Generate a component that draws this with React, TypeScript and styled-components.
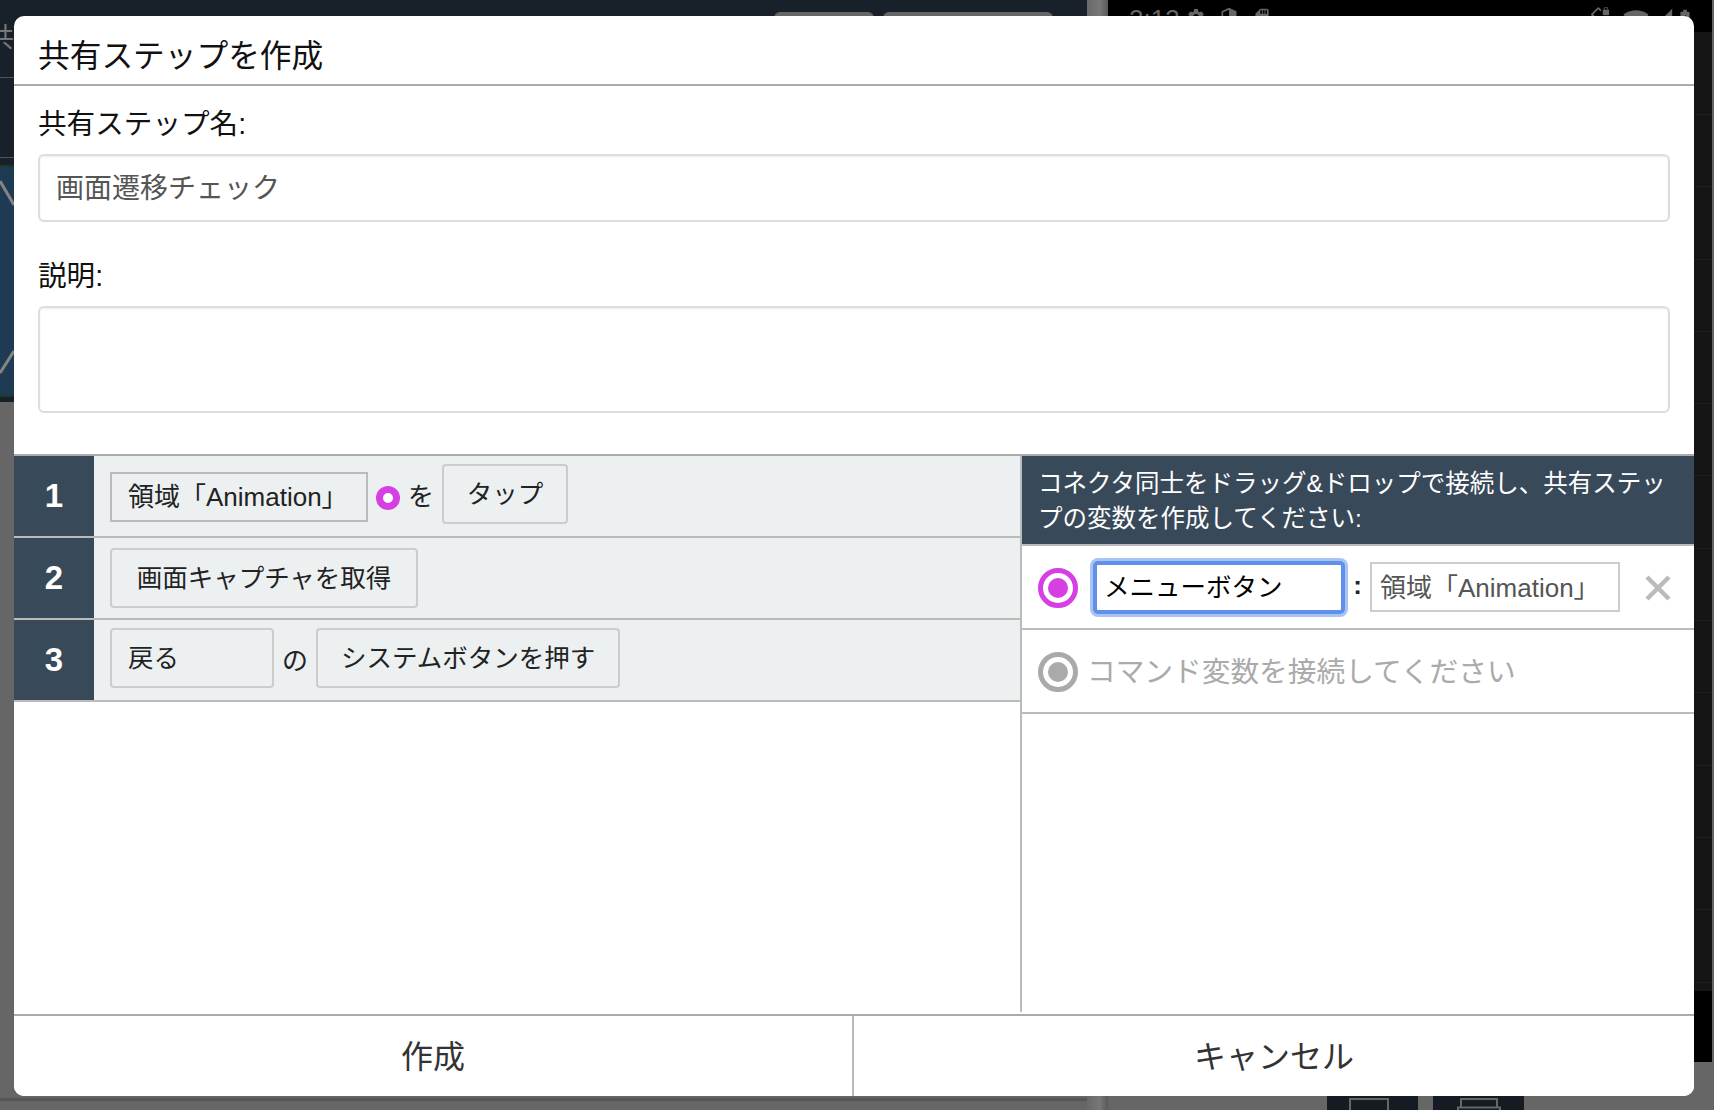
import React from 'react'
import styled, { createGlobalStyle } from 'styled-components'
import {
  MdBatteryChargingFull,
  MdSdStorage,
  MdScreenLockRotation,
  MdSecurity,
  MdSettings,
  MdSignalCellular4Bar,
  MdSignalWifi4Bar
} from 'react-icons/md'

const GlobalStyle = createGlobalStyle`
  html, body {
    margin: 0;
    padding: 0;
    overflow: hidden;
    background: #666;
  }
  * {
    box-sizing: border-box;
  }
  body, input, textarea, button {
    font-family: "Liberation Sans", "Noto Sans CJK JP", sans-serif;
  }
`

const deviceRows = Array.from({ length: 13 }, (_, i) => i)

const App = () => (
  <Page lang="ja">
    <GlobalStyle />
    <Backdrop>
      <AppColumn>
        <AppTop>
          <AppBar>
            <GhostTitle>共</GhostTitle>
            <GhostTab $width={100} />
            <GhostTab $width={170} />
          </AppBar>
          <AppBarRow />
          <Thumb width="14" height="236" viewBox="0 0 14 236">
            <circle cx="3" cy="118" r="115" fill="#1f3b54" stroke="#1f3a2c" strokeWidth="2" />
            <path d="M0 18 L14 42 M14 188 L0 210" stroke="#858585" strokeWidth="3" fill="none" />
          </Thumb>
        </AppTop>
        <AppBottom />
      </AppColumn>
      <Splitter />
      <DeviceColumn>
        <Device>
          <StatusBar>
            <Clock>2:13</Clock>
            <StatusIcons>
              <MdSettings size={20} />
              <MdSecurity size={20} />
              <MdSdStorage size={20} />
            </StatusIcons>
            <StatusRight>
              <StatusSlot $width={40}><MdScreenLockRotation size={22} /></StatusSlot>
              <StatusSlot $width={32}><MdSignalWifi4Bar size={26} /></StatusSlot>
              <StatusSlot $width={22}><MdSignalCellular4Bar size={22} /></StatusSlot>
              <StatusSlot $width={22}><MdBatteryChargingFull size={24} /></StatusSlot>
            </StatusRight>
          </StatusBar>
          <DeviceList>
            {deviceRows.map(row => (
              <DeviceRow key={row} $first={row === 0} />
            ))}
          </DeviceList>
          <NavBar />
        </Device>
        <DeviceTools>
          <ToolBox $shift={8}>
            <ToolIcon width="40" height="12" viewBox="0 0 40 12">
              <path d="M1 12 V1 H39 V12" fill="none" stroke="#666" strokeWidth="2" />
            </ToolIcon>
          </ToolBox>
          <ToolBox $shift={0}>
            <ToolIcon width="44" height="12" viewBox="0 0 44 12">
              <path d="M4 9 V1 H40 V9 M1 12 V9.5 H43 V12" fill="none" stroke="#666" strokeWidth="2" />
            </ToolIcon>
          </ToolBox>
        </DeviceTools>
      </DeviceColumn>
    </Backdrop>

    <Modal>
      <ModalTitle>共有ステップを作成</ModalTitle>
      <Fields>
        <FieldLabel>共有ステップ名:</FieldLabel>
        <NameInput value="画面遷移チェック" readOnly />
        <FieldLabel $spaced>説明:</FieldLabel>
        <DescriptionInput readOnly />
      </Fields>
      <Workspace>
        <StepList>
          <StepRow>
            <StepNumber>1</StepNumber>
            <StepBody $shift={5}>
              <ValueChip $width={258}>領域「Animation」</ValueChip>
              <StepPort />
              <Word>を</Word>
              <CommandButton $width={126}>タップ</CommandButton>
            </StepBody>
          </StepRow>
          <StepRow>
            <StepNumber>2</StepNumber>
            <StepBody $shift={1}>
              <CommandButton $width={308}>画面キャプチャを取得</CommandButton>
            </StepBody>
          </StepRow>
          <StepRow>
            <StepNumber>3</StepNumber>
            <StepBody $shift={5}>
              <CommandButton $width={164} $left>戻る</CommandButton>
              <Word>の</Word>
              <CommandButton $width={304}>システムボタンを押す</CommandButton>
            </StepBody>
          </StepRow>
        </StepList>
        <VariablePanel>
          <VariableHeader>
            コネクタ同士をドラッグ&ドロップで接続し、共有ステップの変数を作成してください:
          </VariableHeader>
          <VariableRow>
            <Connector $color="#d63fe3" />
            <VariableName value="メニューボタン" readOnly />
            <Colon>:</Colon>
            <VariableTarget value="領域「Animation」" readOnly />
            <RemoveIcon width="26" height="26" viewBox="0 0 26 26">
              <path d="M2 2 L24 24 M24 2 L2 24" stroke="#bbb" strokeWidth="4.5" fill="none" />
            </RemoveIcon>
          </VariableRow>
          <VariableRow>
            <Connector $color="#aaa" />
            <Placeholder>コマンド変数を接続してください</Placeholder>
          </VariableRow>
        </VariablePanel>
      </Workspace>
      <Footer>
        <FooterButton>作成</FooterButton>
        <FooterButton $divided>キャンセル</FooterButton>
      </Footer>
    </Modal>
  </Page>
)

const Page = styled.div`
  position: relative;
  width: 1714px;
  height: 1110px;
  overflow: hidden;
  background: #666;
`

const Backdrop = styled.div`
  display: flex;
  height: 100%;
`

const AppColumn = styled.div`
  width: 1087px;
  display: flex;
  flex-direction: column;
`

const AppTop = styled.div`
  height: 402px;
  background: #18202a;
  overflow: hidden;
`

const AppBar = styled.div`
  height: 78px;
  display: flex;
  align-items: flex-start;
  gap: 9px;
  padding-right: 34px;
  border-bottom: 1px solid #555;
`

const AppBarRow = styled.div`
  height: 80px;
  border-bottom: 1px solid #555;
`

const GhostTitle = styled.span`
  margin: 20px auto 0 -13px;
  color: #777;
  font-size: 27px;
  line-height: 36px;
`

const GhostTab = styled.div<{ $width: number }>`
  width: ${props => props.$width}px;
  height: 40px;
  margin-top: 12px;
  border-radius: 6px;
  background: #666;
`

const Thumb = styled.svg`
  display: block;
  margin-top: 5px;
`

const AppBottom = styled.div`
  height: 699px;
  border-bottom: 3px solid #565656;
  background: #666;
`

const Splitter = styled.div`
  width: 21px;
  height: 100%;
  background: linear-gradient(to right, #696969, #787878 60%, #5a5a5a);
`

const DeviceColumn = styled.div`
  width: 604px;
  display: flex;
  flex-direction: column;
`

const Device = styled.div`
  height: 1062px;
  display: flex;
  flex-direction: column;
  background: #000;
`

const StatusBar = styled.div`
  height: 32px;
  flex: none;
  display: flex;
  align-items: flex-start;
  padding: 7px 16px 0 21px;
  color: #666;
  overflow: hidden;
`

const Clock = styled.span`
  width: 50px;
  font-size: 26px;
  line-height: 24px;
`

const StatusIcons = styled.div`
  display: flex;
  gap: 13px;
  margin-left: 7px;
`

const StatusRight = styled.div`
  display: flex;
  margin-left: auto;
`

const StatusSlot = styled.div<{ $width: number }>`
  width: ${props => props.$width}px;
  display: flex;
  justify-content: center;
`

const DeviceList = styled.div`
  height: 959px;
  flex: none;
  overflow: hidden;
  background: #141414;
`

const DeviceRow = styled.div<{ $first: boolean }>`
  height: ${props => (props.$first ? 83 : 72.3)}px;
  border-bottom: 1px solid #1e1e1e;
`

const NavBar = styled.div`
  flex: 1;
  background: #000;
`

const DeviceTools = styled.div`
  display: flex;
  gap: 15px;
  height: 48px;
  padding-left: 219px;
`

const ToolBox = styled.div<{ $shift: number }>`
  width: 91px;
  height: 100%;
  display: flex;
  justify-content: center;
  padding: 36px ${props => props.$shift}px 0 0;
  background: #141b23;
`

const ToolIcon = styled.svg`
  display: block;
`

const Modal = styled.div`
  position: absolute;
  top: 16px;
  left: 14px;
  width: 1680px;
  height: 1080px;
  display: flex;
  flex-direction: column;
  overflow: hidden;
  border-radius: 10px;
  background: #fff;
`

const ModalTitle = styled.div`
  height: 70px;
  flex: none;
  padding: 16px 24px 0;
  border-bottom: 2px solid #aaa;
  color: #111;
  font-size: 31.7px;
  line-height: 48px;
`

const Fields = styled.div`
  height: 368px;
  flex: none;
  padding: 18px 24px 0;
`

const FieldLabel = styled.div<{ $spaced?: boolean }>`
  height: 40px;
  margin: ${props => (props.$spaced ? '34px' : '0')} 0 10px;
  color: #111;
  font-size: 28.6px;
  line-height: 40px;
`

const NameInput = styled.input`
  display: block;
  width: 1632px;
  height: 68px;
  padding: 0 16px 4px;
  border: 2px solid #ddd;
  border-radius: 6px;
  outline: none;
  box-shadow: inset 0 1px 2px rgba(0, 0, 0, 0.08);
  color: #555;
  font-size: 28px;
`

const DescriptionInput = styled.textarea`
  display: block;
  width: 1632px;
  height: 107px;
  padding: 10px 16px;
  border: 2px solid #ddd;
  border-radius: 6px;
  outline: none;
  resize: none;
  box-shadow: inset 0 1px 2px rgba(0, 0, 0, 0.08);
`

const Workspace = styled.div`
  flex: 1;
  min-height: 0;
  display: flex;
  padding-bottom: 2px;
  border-top: 2px solid #aaa;
`

const StepList = styled.div`
  width: 1006px;
  flex: none;
`

const StepRow = styled.div`
  height: 82px;
  display: flex;
  border-bottom: 2px solid #bbb;
  background: #ecf0f1;
`

const StepNumber = styled.div`
  width: 80px;
  flex: none;
  display: flex;
  align-items: center;
  justify-content: center;
  background: #38495a;
  color: #fff;
  font-size: 33px;
  font-weight: 700;
`

const StepBody = styled.div<{ $shift: number }>`
  flex: 1;
  display: flex;
  align-items: center;
  padding: 0 0 ${props => props.$shift}px 16px;
  color: #222;
  font-size: 26px;
`

const ValueChip = styled.div<{ $width: number }>`
  width: ${props => props.$width}px;
  height: 50px;
  margin-top: 7px;
  padding-left: 16px;
  border: 2px solid #bbb;
  line-height: 46px;
  white-space: nowrap;
`

const StepPort = styled.span`
  width: 24px;
  height: 24px;
  margin: 9px 0 0 8px;
  border: 7px solid #d63fe3;
  border-radius: 50%;
  background: #fff;
`

const Word = styled.span`
  margin: 6px 8px 0;
  line-height: 36px;
`

const CommandButton = styled.div<{ $width: number; $left?: boolean }>`
  width: ${props => props.$width}px;
  height: 60px;
  padding-left: ${props => (props.$left ? '16px' : '0')};
  border: 2px solid #ccc;
  border-radius: 4px;
  font-size: 25.5px;
  line-height: 57px;
  text-align: ${props => (props.$left ? 'left' : 'center')};
  white-space: nowrap;
`

const VariablePanel = styled.div`
  flex: 1;
  border-left: 2px solid #bbb;
`

const VariableHeader = styled.div`
  height: 90px;
  padding: 10px 20px 0 16px;
  border-bottom: 2px solid #bbb;
  background: #38495a;
  color: #fff;
  font-size: 24.5px;
  line-height: 35px;
`

const VariableRow = styled.div`
  height: 84px;
  display: flex;
  align-items: center;
  padding-left: 16px;
  border-bottom: 2px solid #bbb;
`

const Connector = styled.span<{ $color: string }>`
  width: 40px;
  height: 40px;
  flex: none;
  display: flex;
  align-items: center;
  justify-content: center;
  margin-top: 2px;
  border: 5px solid ${props => props.$color};
  border-radius: 50%;
  background: #fff;

  &::after {
    content: '';
    width: 20px;
    height: 20px;
    border-radius: 50%;
    background: ${props => props.$color};
  }
`

const VariableName = styled.input`
  width: 252px;
  height: 53px;
  margin-left: 15px;
  padding: 0 7px 5px;
  border: 4px solid #5f90ea;
  border-radius: 5px;
  outline: none;
  box-shadow: 0 0 0 3px #a9c4f4;
  color: #000;
  font-size: 25.5px;
`

const Colon = styled.span`
  width: 25px;
  margin-bottom: 4px;
  color: #222;
  font-size: 26px;
  font-weight: 700;
  text-align: center;
`

const VariableTarget = styled.input`
  width: 250px;
  height: 50px;
  padding: 0 8px 4px;
  border: 2px solid #ccc;
  outline: none;
  color: #555;
  font-size: 26px;
`

const RemoveIcon = styled.svg`
  flex: none;
  margin: 2px 0 0 25px;
`

const Placeholder = styled.span`
  margin: 0 0 4px 9px;
  color: #aaa;
  font-size: 28.7px;
`

const Footer = styled.div`
  height: 82px;
  flex: none;
  display: grid;
  grid-template-columns: 838px 1fr;
  border-top: 2px solid #aaa;
`

const FooterButton = styled.button<{ $divided?: boolean }>`
  padding: 0 0 4px;
  border: 0;
  border-left: ${props => (props.$divided ? '2px solid #bbb' : '0')};
  background: #fff;
  color: #333;
  font-size: 32px;
`

export default App
